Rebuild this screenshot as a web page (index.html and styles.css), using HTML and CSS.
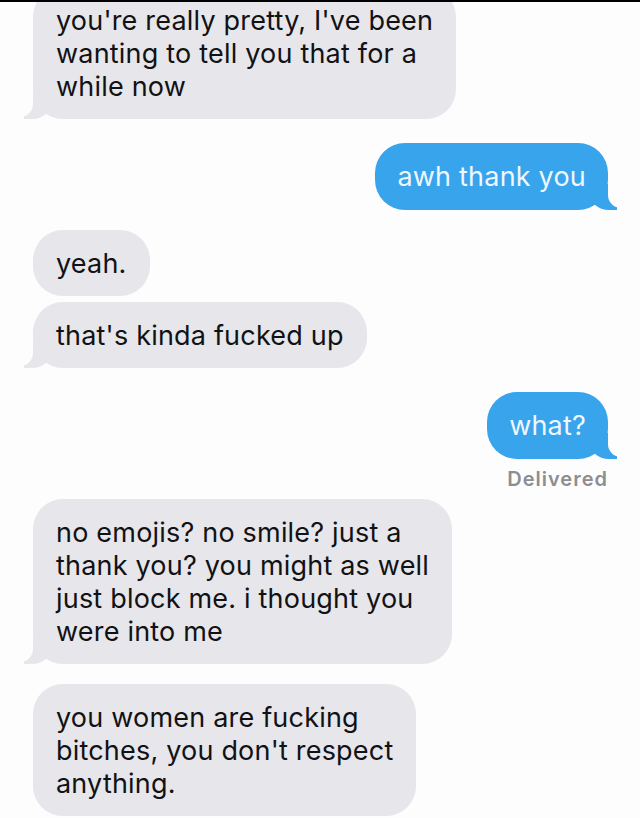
FILE: index.html
```html
<!DOCTYPE html>
<html lang="en">
<head>
    <meta charset="UTF-8">
    <meta name="viewport" content="width=device-width, initial-scale=1.0">
    <title>Messages</title>
    <link rel="stylesheet" href="styles.css">
</head>
<body>
    <div class="screen">
        <div class="thread">
            <div class="msg in tail">you're really pretty, I've been<br>wanting to tell you that for a<br>while now</div>
            <div class="msg out tail gap-l">awh thank you</div>
            <div class="msg in gap-m">yeah.</div>
            <div class="msg in tail gap-s">that's kinda fucked up</div>
            <div class="msg out tail gap-l">what?</div>
            <div class="status">Delivered</div>
            <div class="msg in tail gap-st">no emojis? no smile? just a<br>thank you? you might as well<br>just block me. i thought you<br>were into me</div>
            <div class="msg in gap-m">you women are fucking<br>bitches, you don't respect<br>anything.</div>
        </div>
    </div>
</body>
</html>
```

FILE: styles.css
```css
body{
    margin: 0;
    background: #fdfdfd;
}
.screen{
    height: 818px;
    box-sizing: border-box;
    border-top: 2px solid #000;
    overflow: hidden;
    font-family: "Inter", "Liberation Sans", sans-serif;
}
.thread{
    display: flex;
    flex-direction: column;
    align-items: flex-start;
    padding: 0 32px 0 33px;
    margin-top: -15px; /* first bubble runs off the top */
}
.msg{
    position: relative;
    white-space: nowrap;
    font-size: 27px;
    line-height: 33px;
    letter-spacing: 0.2px;
    padding: 16.5px 23px;
    border-radius: 30px;
}
.msg.in{
    background: #e6e6eb;
    color: #121214;
}
.msg.out{
    align-self: flex-end;
    background: #37a4ec;
    color: #eef7fd;
    padding: 17px 22px;
}

/* tails */
.msg.tail::before,
.msg.tail::after{
    content: "";
    position: absolute;
    bottom: 0;
    height: 26px;
}
.msg.in.tail::before{
    left: -9px;
    width: 28px;
    background: #e6e6eb;
    border-bottom-right-radius: 20px 18px;
}
.msg.in.tail::after{
    left: -30px;
    width: 30px;
    bottom: 2px;
    background: #fdfdfd;
    border-bottom-right-radius: 13px;
}
.msg.out.tail::before{
    right: -9px;
    width: 28px;
    background: #37a4ec;
    border-bottom-left-radius: 20px 18px;
}
.msg.out.tail::after{
    right: -30px;
    width: 30px;
    bottom: 2px;
    background: #fdfdfd;
    border-bottom-left-radius: 13px;
}

.gap-s{ margin-top: 6px; }
.gap-m{ margin-top: 20px; }
.gap-l{ margin-top: 24px; }
.gap-st{ margin-top: 7px; }

.status{
    align-self: flex-end;
    margin-top: 7px;
    font-size: 20px;
    line-height: 26px;
    font-weight: 600;
    letter-spacing: 1px;
    color: #8d8d92;
}
```
